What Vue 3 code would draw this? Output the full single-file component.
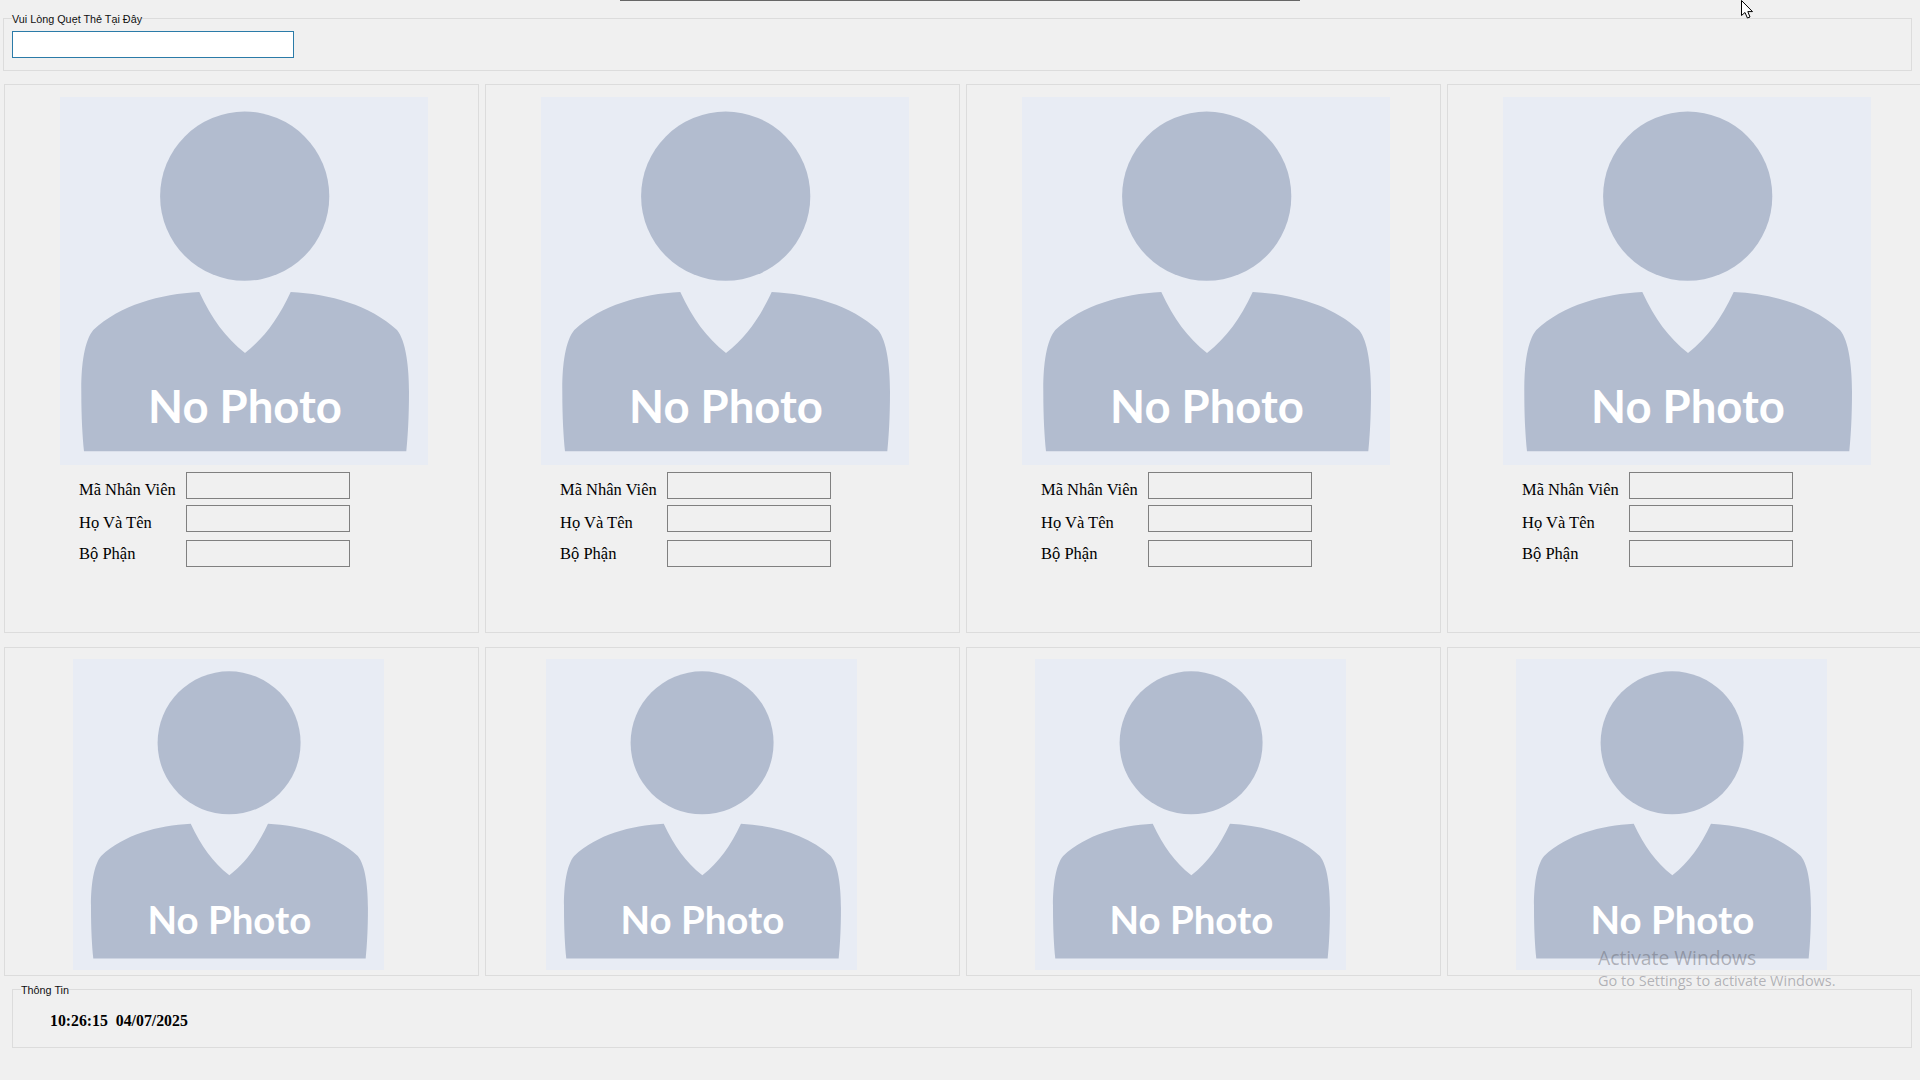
<script setup>
const fields = ['Mã Nhân Viên', 'Họ Và Tên', 'Bộ Phận']
const topCards = [55, 55, 55, 55]
const bottomCards = [68, 60, 68, 68]
</script>

<template>
  <div class="screen">
    <section class="group scan">
      <span class="legend">Vui Lòng Quẹt Thẻ Tại Đây</span>
      <input class="scan-input" type="text" aria-label="Vui Lòng Quẹt Thẻ Tại Đây" />
    </section>

    <div class="row row-top">
      <article v-for="(offset, i) in topCards" :key="'t' + i" class="card">
        <svg class="photo photo-large" :style="{ marginLeft: offset + 'px' }" viewBox="0 0 368 368" role="img" aria-label="No Photo">
          <rect width="368" height="368" fill="#e8ecf4" />
          <circle cx="184.7" cy="99.2" r="84.6" fill="#b2bccf" />
          <path fill="#b2bccf" d="M139.3 195C100 197 60 208 33.3 233C24 244 21 270 21.3 295C21.3 320 22.5 340 24 354.3L346.3 354.3C347.8 340 349 320 349 295C349 270 346 244 337 233C310 208 270 197 230.7 195C218 222 205 240 185 256C165 240 152 222 139.3 195Z" />
          <text class="photo-text" x="185" y="325.7" text-anchor="middle">No Photo</text>
        </svg>
        <div class="fields">
          <div v-for="name in fields" :key="name" class="field">
            <label class="field-label">{{ name }}</label>
            <input class="field-input" type="text" readonly :aria-label="name" />
          </div>
        </div>
      </article>
    </div>

    <div class="row row-bottom">
      <article v-for="(offset, i) in bottomCards" :key="'b' + i" class="card">
        <svg class="photo photo-small" :style="{ marginLeft: offset + 'px' }" viewBox="0 0 368 368" role="img" aria-label="No Photo">
          <rect width="368" height="368" fill="#e8ecf4" />
          <circle cx="184.7" cy="99.2" r="84.6" fill="#b2bccf" />
          <path fill="#b2bccf" d="M139.3 195C100 197 60 208 33.3 233C24 244 21 270 21.3 295C21.3 320 22.5 340 24 354.3L346.3 354.3C347.8 340 349 320 349 295C349 270 346 244 337 233C310 208 270 197 230.7 195C218 222 205 240 185 256C165 240 152 222 139.3 195Z" />
          <text class="photo-text" x="185" y="325.7" text-anchor="middle">No Photo</text>
        </svg>
      </article>
    </div>

    <section class="group info">
      <span class="legend">Thông Tin</span>
      <div class="clock">10:26:15&nbsp;&nbsp;04/07/2025</div>
    </section>

    <div class="top-sliver"></div>

    <svg class="cursor" width="14" height="22" viewBox="0 0 14 22">
      <path d="M0.5 0.5L0.5 15.5L4 12.5L6.4 18L9 17L6.8 11.6L11.5 11.6Z" fill="#fff" stroke="#000" stroke-width="1" />
    </svg>

    <div class="watermark">
      <div class="wm-title">Activate Windows</div>
      <div class="wm-sub">Go to Settings to activate Windows.</div>
    </div>
  </div>
</template>

<style>
html, body { margin: 0; background: #f0f0f0; }
</style>

<style scoped>
.screen {
  position: relative;
  width: 1920px;
  height: 1080px;
  overflow: hidden;
  box-sizing: border-box;
  padding-top: 18px;
  background: #f0f0f0;
}
.group {
  box-sizing: border-box;
  border: 1px solid #dcdcdc;
  display: flex;
  flex-direction: column;
  align-items: flex-start;
}
.legend {
  display: block;
  margin-top: -7px;
  background: #f0f0f0;
  font: 10.8px/14px "Liberation Sans", Arial, sans-serif;
  color: #111;
  white-space: nowrap;
}
.scan {
  width: 1909px;
  height: 53px;
  margin-left: 3px;
  padding-left: 8px;
}
.scan-input {
  box-sizing: border-box;
  width: 282px;
  height: 27px;
  margin-top: 5px;
  border: 1px solid #2b7ba8;
  border-radius: 0;
  background: #fff;
  outline: none;
  padding: 0;
}
.row {
  display: grid;
  grid-template-columns: repeat(4, 475px);
  column-gap: 6px;
  margin-left: 4px;
}
.row-top { margin-top: 13px; height: 549px; }
.row-bottom { margin-top: 14px; height: 329px; }
.card {
  box-sizing: border-box;
  border: 1px solid #dcdcdc;
  padding-top: 12px;
}
.photo { display: block; }
.photo-large { width: 368px; height: 368px; }
.row-bottom .card { padding-top: 11px; }
.photo-small { width: 311px; height: 311px; }
.photo-text {
  font-family: Lato, "Open Sans", sans-serif;
  font-weight: 700;
  font-size: 45.5px;
  fill: #fff;
}
.fields {
  display: flex;
  flex-direction: column;
  gap: 6px;
  margin-top: 7px;
  margin-left: 74px;
}
.field { display: flex; align-items: flex-start; }
.field:nth-child(3) { margin-top: 2px; }
.field-label {
  width: 107px;
  padding-top: 9px;
  font: 16.5px/18px "Liberation Serif", "Times New Roman", serif;
  color: #000;
  white-space: nowrap;
}
.field:nth-child(3) .field-label { padding-top: 5px; }
.field-input {
  box-sizing: border-box;
  width: 164px;
  height: 27px;
  border: 1px solid #808080;
  border-radius: 0;
  background: #f0f0f0;
  outline: none;
  padding: 0;
}
.info {
  width: 1900px;
  height: 59px;
  margin-top: 13px;
  margin-left: 12px;
  padding-left: 8px;
}
.clock {
  margin-top: 15px;
  margin-left: 29px;
  font: bold 15.8px/18px "Liberation Serif", "Times New Roman", serif;
  color: #000;
  white-space: nowrap;
}
.top-sliver {
  position: absolute;
  top: 0;
  left: 620px;
  width: 680px;
  height: 1px;
  background: #666;
}
.cursor {
  position: absolute;
  top: 0;
  left: 1741px;
}
.watermark {
  position: absolute;
  left: 1598px;
  top: 945px;
  font-family: "Open Sans", sans-serif;
  color: rgba(100, 100, 110, 0.45);
  white-space: nowrap;
}
.wm-title { font-size: 19.3px; line-height: 26px; }
.wm-sub { font-size: 14.5px; line-height: 20px; }
</style>
